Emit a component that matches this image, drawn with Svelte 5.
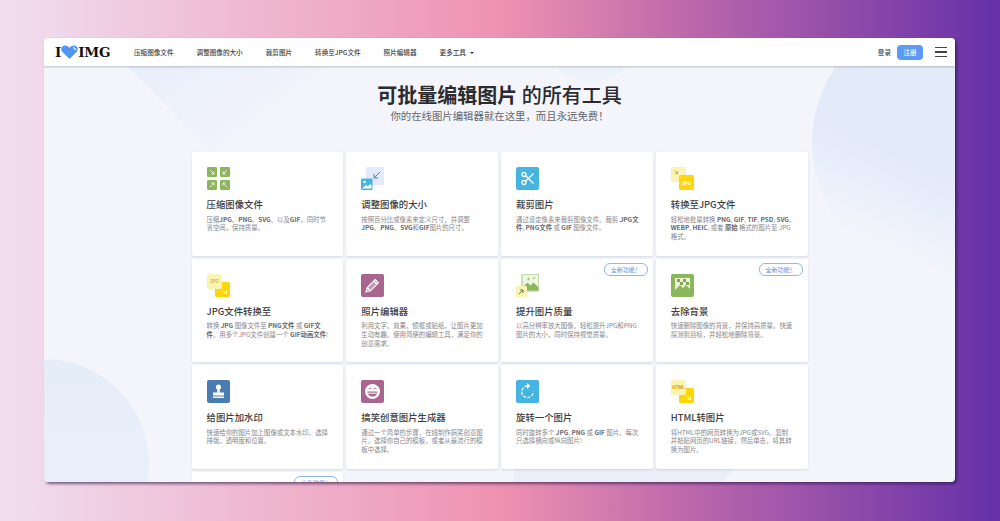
<script>
  const links = ['压缩图像文件', '调整图像的大小', '裁剪图片', '转换至JPG文件', '照片编辑器'];

  const green = '#8ab75c';
  const blue = '#45b4e2';
  const mauve = '#a8668f';
  const yellow = '#ffd60a';
  const pale = '#fbf3b5';

  const tile = (x, y, d) =>
    `<rect x="${x}" y="${y}" width="10" height="10" rx="1.2" fill="${green}"/><path d="${d}" fill="none" stroke="#f3f7e4" stroke-width="1"/>`;

  const icons = {
    compress:
      tile(0, 0, 'M3 3l4 4M7 4.4V7H4.4') +
      tile(13, 0, 'M20 3l-4 4M16 4.4V7h2.6') +
      tile(0, 13, 'M7 16l-4 4M4.4 16H7v2.6') +
      tile(13, 13, 'M16 16l4 4M16 18.6V16h2.6'),
    resize: `<rect x="5" y="0" width="18" height="18" rx="1.5" fill="#e3eaf9"/>
      <path d="M19 5l-6 6M13 7v4h4" fill="none" stroke="#4a86b8" stroke-width="1"/>
      <rect x="0" y="11.500" width="11.500" height="11.500" rx="1" fill="${blue}"/>
      <circle cx="3.500" cy="15" r="1.300" fill="#fff"/>
      <path d="M1 21.500l4-3.500 2 1.500 2-2.500 1.500 1.500v3z" fill="#fff"/>`,
    crop: `<rect width="23" height="23" rx="2" fill="${blue}"/>
      <g fill="none" stroke="#fff" stroke-width="1.300">
        <circle cx="8" cy="7.500" r="2"/><circle cx="8" cy="15.500" r="2"/>
        <path d="M9.600 8.700L17.500 16.500M9.600 14.300L17.500 6.500"/>
      </g>`,
    tojpg: `<rect width="15" height="15" rx="1.500" fill="${pale}"/>
      <path d="M3.500 3.500l3 3M6.500 4v2.500H4" fill="none" stroke="#b9a520" stroke-width=".8"/>
      <rect x="8" y="8" width="15" height="15" rx="1.500" fill="${yellow}"/>
      <text x="15.500" y="17.500" text-anchor="middle" class="tag" fill="#fff">JPG</text>`,
    fromjpg: `<rect x="8" y="8" width="15" height="15" rx="1.500" fill="${yellow}"/>
      <path d="M16 16l3.500 3.500M19.500 16.500v3h-3" fill="none" stroke="#fff" stroke-width=".9"/>
      <rect width="15" height="15" rx="1.500" fill="${pale}"/>
      <text x="7.500" y="9" text-anchor="middle" class="tag" fill="#d0bd4a">JPG</text>`,
    editor: `<rect width="23" height="23" rx="2" fill="${mauve}"/>
      <path d="M5 18l1.200-4.500 8-8 3.300 3.300-8 8zM12.700 7l3.300 3.300M6.200 13.500l3.300 3.300" fill="#c99ab6" stroke="#fff" stroke-width="1.100"/>`,
    upscale: `<rect x="6" y="0" width="17" height="17" rx="1.500" fill="#eef5e0" stroke="${green}" stroke-width=".8"/>
      <path d="M6.500 16.600v-3l5-5 3 3 3-3 5 5v3z" fill="${green}"/>
      <path d="M11 5h3M12.500 3.500v3M17 4h2M18 3v2" stroke="${green}" stroke-width=".7"/>
      <rect x="0" y="12" width="11" height="11" fill="${pale}"/>
      <path d="M3 20l4-4M4 16h3v3" fill="none" stroke="#5f7f3a" stroke-width="1"/>`,
    removebg: `<rect width="23" height="23" rx="2" fill="${green}"/>
      <rect x="4" y="4" width="15" height="15" fill="#eef3d8"/>
      <path d="M4 19v-3l5-5 3 3 3-3 4 4v4z" fill="${green}"/>
      <path d="M6 5h3v3H6zM12 5h3v3h-3zM9 8h3v3H9zM15 8h3v3h-3z" fill="#7fa755"/>`,
    watermark: `<rect width="23" height="23" rx="2" fill="#4a7cb2"/>
      <circle cx="11.500" cy="7" r="2.600" fill="#fff"/>
      <path d="M10.300 9h2.400v3.500h4.300v3H6v-3h4.300z" fill="#fff"/>
      <rect x="6" y="16.500" width="11" height="1.500" fill="#fff"/>`,
    meme: `<rect width="23" height="23" rx="2" fill="${mauve}"/>
      <circle cx="11.500" cy="11.500" r="7.500" fill="#fff"/>
      <path d="M6.500 11.500h10c0 3-2 5-5 5s-5-2-5-5z" fill="${mauve}"/>
      <path d="M7 13.200h9" stroke="#fff" stroke-width="1"/>
      <path d="M7.500 9l1.500-1 1.500 1M12.500 9l1.500-1 1.500 1" fill="none" stroke="${mauve}" stroke-width=".9"/>`,
    rotate: `<rect width="23" height="23" rx="2" fill="${blue}"/>
      <path d="M11.500 6a5.800 5.800 0 1 0 5.800 5.800" fill="none" stroke="#fff" stroke-width="1.300" stroke-dasharray="3 1.400"/>
      <path d="M11 3l3.500 3L11 9z" fill="#fff"/>`,
    html: `<rect x="8" y="8" width="15" height="15" rx="1.500" fill="${yellow}"/>
      <path d="M16 16l3.500 3.500M19.500 16.500v3h-3" fill="none" stroke="#fff" stroke-width=".9"/>
      <rect width="15" height="15" rx="1.500" fill="${pale}"/>
      <text x="7.500" y="9" text-anchor="middle" class="tag" fill="#b9a520">HTML</text>`
  };

  const cards = [
    { icon: 'compress', title: '压缩图像文件', desc: '压缩<b>JPG</b>、<b>PNG</b>、<b>SVG</b>、以及<b>GIF</b>，同时节省空间，保持质量。' },
    { icon: 'resize', title: '调整图像的大小', desc: '按照百分比或像素来定义尺寸，并调整<b>JPG</b>、<b>PNG</b>、<b>SVG</b>和<b>GIF</b>图片的尺寸。' },
    { icon: 'crop', title: '裁剪图片', desc: '通过设定像素来裁剪图像文件。裁剪 <b>JPG文件</b>, <b>PNG文件</b> 或 <b>GIF</b> 图像文件。' },
    { icon: 'tojpg', title: '转换至JPG文件', desc: '轻松地批量转换 <b>PNG</b>, <b>GIF</b>, <b>TIF</b>, <b>PSD</b>, <b>SVG</b>, <b>WEBP</b>, <b>HEIC</b>, 或者 <b>原始</b> 格式的图片至 JPG 格式。' },
    { icon: 'fromjpg', title: 'JPG文件转换至', desc: '转换 <b>JPG</b> 图像文件至 <b>PNG文件</b> 或 <b>GIF文件</b>。用多个JPG文件创建一个 <b>GIF动画文件</b>!' },
    { icon: 'editor', title: '照片编辑器', desc: '利用文字、效果、镜框或贴纸，让图片更加生动有趣。使用简便的编辑工具，满足你的创意需求。' },
    { icon: 'upscale', title: '提升图片质量', desc: '以高分辨率放大图像。轻松提升JPG和PNG图片的大小，同时保持视觉质量。', isNew: true },
    { icon: 'removebg', title: '去除背景', desc: '快速删除图像的背景，并保持高质量。快速探测到目标，并轻松地删除背景。', isNew: true },
    { icon: 'watermark', title: '给图片加水印', desc: '快速给你的图片加上图像或文本水印。选择排版、透明度和位置。' },
    { icon: 'meme', title: '搞笑创意图片生成器', desc: '通过一个简单的步骤，在线制作搞笑创意图片。选择你自己的模板，或者从最流行的模板中选择。' },
    { icon: 'rotate', title: '旋转一个图片', desc: '同时旋转多个 <b>JPG</b>, <b>PNG</b> 或 <b>GIF</b> 图片。每次只选择横向或纵向图片!' },
    { icon: 'html', title: 'HTML转图片', desc: '将HTML中的网页转换为JPG或SVG。复制并粘贴网页的URL链接，然后单击，将其转换为图片。' },
    { icon: null, title: '', desc: '', isNew: true }
  ];
</script>

<div class="stage">
  <div class="window">
    <svg class="shapes" viewBox="0 0 911 416" aria-hidden="true">
      <defs>
        <linearGradient id="fadeRight" gradientUnits="userSpaceOnUse" x1="830" y1="80" x2="793" y2="162">
          <stop offset="0" stop-color="#e3eaf7" />
          <stop offset="0.4" stop-color="#e9eefb" />
          <stop offset="1" stop-color="#f3f5fa" />
        </linearGradient>
        <linearGradient id="fadeLeft" x1="0" y1="0" x2="0" y2="1">
          <stop offset="0" stop-color="#e5edf9" />
          <stop offset="1" stop-color="#edf1fb" />
        </linearGradient>
        <linearGradient id="fadeTop" x1="0" y1="0" x2="1" y2="0.6">
          <stop offset="0" stop-color="#e9eefa" />
          <stop offset="1" stop-color="#f3f5fa" />
        </linearGradient>
      </defs>
      <polygon points="84,0 165,85 280,0" fill="url(#fadeTop)" />
      <circle cx="547" cy="-30" r="46" fill="#edf1fa" />
      <circle cx="903" cy="77" r="135" fill="url(#fadeRight)" />
      <circle cx="0" cy="398" r="105" fill="url(#fadeLeft)" />
      <polygon points="470,402 691,402 678,416 470,416" fill="#ebeef8" />
    </svg>

    <nav>
      <div class="logo">
        <span>I</span>
        <svg width="17" height="14" viewBox="0 0 17 14" aria-hidden="true">
          <path d="M8.500 14L1 6.500C-1 3.500 1 .500 4.200 .500c2 0 3.500 1 4.300 2.500C9.300 1.500 10.800 .500 12.800 .500c3.200 0 5.200 3 3.200 6z" fill="#4f94f0" />
          <path d="M12 1l4 4-3 0z" fill="#d6e6fb" />
        </svg>
        <span>IMG</span>
      </div>
      <ul>
        {#each links as link}
          <li>{link}</li>
        {/each}
        <li class="more">更多工具 <i></i></li>
      </ul>
      <div class="account">
        <span>登录</span>
        <button>注册</button>
        <div class="burger"><i></i><i></i><i></i></div>
      </div>
    </nav>

    <main>
      <h1>可批量编辑图片 <span>的所有工具</span></h1>
      <p class="lead">你的在线图片编辑器就在这里，而且永远免费！</p>

      <div class="grid">
        {#each cards as card}
          <article>
            {#if card.isNew}
              <span class="badge">全新功能！</span>
            {/if}
            {#if card.icon}
              <svg class="icon" viewBox="0 0 23 23" aria-hidden="true">{@html icons[card.icon]}</svg>
              <h2>{card.title}</h2>
              <p>{@html card.desc}</p>
            {/if}
          </article>
        {/each}
      </div>
    </main>
  </div>
</div>

<style>
  :global(body) {
    margin: 0;
    font-family: 'Noto Sans CJK SC', 'Noto Sans', sans-serif;
  }

  .stage {
    height: 521px;
    box-sizing: border-box;
    padding: 38px 45px 39px 44px;
    background: linear-gradient(90deg, #f0dff0 0%, #ee92b1 50%, #b966ab 70%, #6530a8 100%);
    overflow: hidden;
  }

  .window {
    position: relative;
    height: 100%;
    background: #f3f5fa;
    border-radius: 4px;
    overflow: hidden;
    box-shadow: 2px 2px 3px rgba(40, 20, 70, 0.6);
  }

  .shapes {
    position: absolute;
    left: 0;
    top: 28px;
    width: 911px;
    height: 416px;
  }

  nav {
    position: relative;
    display: flex;
    align-items: center;
    height: 28px;
    padding: 0 8px 0 11px;
    background: #fff;
    box-shadow: 0 1px 2px rgba(60, 60, 90, 0.3);
  }

  .logo {
    display: flex;
    align-items: center;
    width: 79px;
    font-family: 'DejaVu Serif', serif;
    font-weight: 700;
    font-size: 13.500px;
    letter-spacing: -0.2px;
    color: #111;
  }

  ul {
    display: flex;
    align-items: center;
    gap: 23px;
    flex: 1;
    margin: 0;
    padding: 0;
    list-style: none;
    font-size: 6.600px;
    font-weight: 500;
    color: #444;
  }

  .more i {
    display: inline-block;
    margin-left: 3px;
    vertical-align: 1px;
    border: 2px solid transparent;
    border-top: 2.500px solid #333;
    border-bottom: 0;
  }

  .account {
    display: flex;
    align-items: center;
    font-size: 6.600px;
    font-weight: 500;
    color: #444;
  }

  button {
    width: 26px;
    height: 15px;
    margin: 0 12px 0 6px;
    padding: 0;
    border: 0;
    border-radius: 4px;
    background: #5b9bf5;
    color: #fff;
    font: inherit;
  }

  .burger {
    display: flex;
    flex-direction: column;
    gap: 3px;
    width: 12px;
  }

  .burger i {
    height: 1.200px;
    background: #444;
  }

  main {
    position: relative;
    padding-top: 15px;
  }

  h1 {
    margin: 0;
    font-size: 20px;
    line-height: 27px;
    font-weight: 700;
    text-align: center;
    color: #2b2b2f;
  }

  h1 span {
    font-weight: 500;
  }

  .lead {
    margin: 0;
    font-size: 10.400px;
    line-height: 16px;
    text-align: center;
    color: #66666c;
  }

  .grid {
    display: grid;
    grid-template-columns: repeat(4, 151.750px);
    grid-auto-rows: 103.500px;
    gap: 3px;
    justify-content: center;
    margin-top: 28px;
  }

  article {
    position: relative;
    box-sizing: border-box;
    padding: 15px 13.500px 0 15px;
    background: #fff;
    border-radius: 2px;
    box-shadow: 0 1px 2px rgba(80, 90, 130, 0.18);
  }

  .icon {
    display: block;
    width: 23px;
    height: 23px;
  }

  .icon :global(.tag) {
    font-family: 'Liberation Sans', sans-serif;
    font-size: 4.500px;
    font-weight: 700;
  }

  h2 {
    margin: 7px 0 0;
    font-size: 9.400px;
    line-height: 14px;
    font-weight: 500;
    color: #3c3c40;
  }

  article p {
    margin: 4.500px 0 0;
    font-size: 6.400px;
    line-height: 8.900px;
    color: #85858b;
  }

  article p :global(b) {
    font-weight: 700;
    color: #66666c;
  }

  .badge {
    position: absolute;
    top: 4px;
    right: 5px;
    width: 44px;
    height: 13px;
    box-sizing: border-box;
    border: 1px solid #93b6e8;
    border-radius: 6px;
    background: #fff;
    font-size: 6px;
    line-height: 11px;
    text-align: center;
    color: #5b8fdc;
  }
</style>
